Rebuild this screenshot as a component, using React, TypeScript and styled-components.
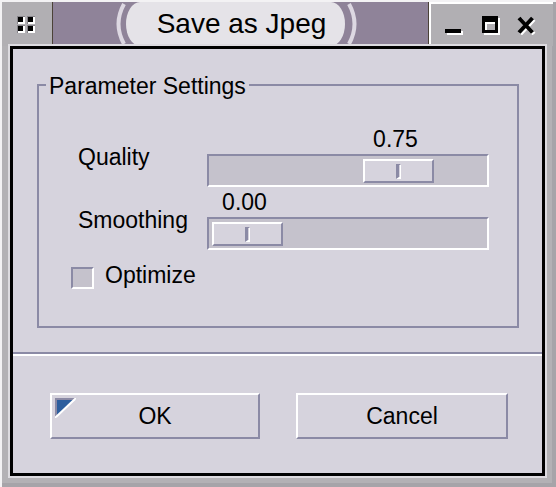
import styled, { createGlobalStyle } from "styled-components";

const GlobalStyle = createGlobalStyle`
  html, body {
    margin: 0;
    padding: 0;
    background: #b3b1b5;
  }
  body {
    font-family: "Liberation Sans", Arial, Helvetica, sans-serif;
    color: #000;
  }
`;

const BG = "#d6d3dd";
const TROUGH = "#c5c2cc";
const DARK = "#8b8aa5";

interface Param {
  label: string;
  value: number;
}

const params: Param[] = [
  { label: "Quality", value: 0.75 },
  { label: "Smoothing", value: 0 },
];

// free travel of the slider thumb inside its trough
const TRAVEL = 201;

export default function App() {
  return (
    <>
      <GlobalStyle />
      <Window>
        <TitleBar>
          <MenuButton>
            <svg width="20" height="18" viewBox="0 0 20 18">
              {[
                [0, 0],
                [10, 0],
                [0, 9],
                [10, 9],
              ].map(([x, y]) => (
                <g key={`${x}-${y}`}>
                  <rect x={x} y={y} width="8" height="8" fill="#858389" />
                  <rect x={x + 1} y={y + 1} width="7" height="7" fill="#fff" />
                  <rect x={x + 1} y={y + 1} width="5" height="5" fill="#000" />
                </g>
              ))}
            </svg>
          </MenuButton>
          <TitleCenter>
            <svg width="12" height="44" viewBox="0 0 12 44">
              <path d="M10 2 Q -1 22 10 42" stroke="#ddd8e2" strokeWidth="4" fill="none" />
            </svg>
            <TitlePill>Save as Jpeg</TitlePill>
            <svg width="14" height="44" viewBox="0 0 14 44">
              <path d="M4 2 Q 15 22 4 42" stroke="#ddd8e2" strokeWidth="4" fill="none" />
            </svg>
          </TitleCenter>
          <WindowControls>
            <svg width="19" height="20" viewBox="0 0 19 20">
              <rect x="2" y="16" width="16" height="4" fill="#fff" />
              <rect x="0" y="14" width="16" height="4" fill="#000" />
            </svg>
            <svg width="19" height="20" viewBox="0 0 19 20">
              <path
                d="M3 3 H19 V20 H3 Z M6 9 V17 H16 V9 Z"
                fill="#fff"
                fillRule="evenodd"
              />
              <path
                d="M1 1 H17 V18 H1 Z M4 7 V15 H14 V7 Z"
                fill="#000"
                fillRule="evenodd"
              />
            </svg>
            <svg width="19" height="20" viewBox="0 0 19 20">
              <path d="M3.5 4.5 L17 19 M17 4.5 L3.5 19" stroke="#fff" strokeWidth="4" />
              <path d="M2 3 L15.5 17.5 M15.5 3 L2 17.5" stroke="#000" strokeWidth="4" />
            </svg>
          </WindowControls>
        </TitleBar>

        <ClientWrap>
          <Client>
            <ParamGroup>
              <GroupLegend>Parameter Settings</GroupLegend>
              {params.map((p) => (
                <SliderRow key={p.label}>
                  <FieldLabel>{p.label}</FieldLabel>
                  <ValueText $value={p.value}>{p.value.toFixed(2)}</ValueText>
                  <Trough>
                    <Thumb $value={p.value}>
                      <Grip />
                    </Thumb>
                  </Trough>
                </SliderRow>
              ))}
              <CheckRow>
                <CheckBox />
                <span>Optimize</span>
              </CheckRow>
            </ParamGroup>

            <Separator />

            <ButtonRow>
              <DialogButton $w={210}>
                <FocusMark width="21" height="20" viewBox="0 0 21 20">
                  <polygon points="0,0 21,0 0,20" fill="#2d5e9e" />
                  <rect x="0" y="0" width="21" height="2" fill={DARK} />
                  <rect x="0" y="0" width="2" height="20" fill={DARK} />
                  <line x1="21" y1="0" x2="0" y2="20" stroke="#fff" strokeWidth="2" />
                </FocusMark>
                OK
              </DialogButton>
              <DialogButton $w={212}>Cancel</DialogButton>
            </ButtonRow>
          </Client>
        </ClientWrap>
      </Window>
    </>
  );
}

const Window = styled.div`
  box-sizing: border-box;
  width: 556px;
  height: 487px;
  display: flex;
  flex-direction: column;
  padding: 2px 3px 0 2px;
  background: #b3b1b5;
  box-shadow: inset 2px 2px 0 #f3f2f4, inset -4px -4px 0 #a6a4a9;
`;

const TitleBar = styled.div`
  display: flex;
  height: 44px;
  flex-shrink: 0;
`;

const MenuButton = styled.div`
  width: 50px;
  border-right: 1px solid #4b4238;
  background: #b1afb3;
  display: flex;
  align-items: center;
  justify-content: center;
  padding-top: 2px;
  box-sizing: border-box;
  flex-shrink: 0;
  width: 51px;
`;

const TitleCenter = styled.div`
  flex: 1;
  display: flex;
  justify-content: center;
  align-items: stretch;
  background: #8f8399;
  padding-right: 8px;
`;

const TitlePill = styled.div`
  display: flex;
  align-items: center;
  background: #e5e3e8;
  border-radius: 14px / 22px;
  padding: 0 19px 0 31px;
  font-size: 28px;
  line-height: 28px;
  white-space: nowrap;
`;

const WindowControls = styled.div`
  box-sizing: border-box;
  width: 125px;
  flex-shrink: 0;
  display: flex;
  align-items: center;
  gap: 17px;
  padding: 2px 0 0 16px;
  border-left: 1px solid #4b4238;
  background: #b1afb3;
  box-shadow: inset 2px 2px 0 #fff;
`;

const ClientWrap = styled.div`
  flex: 1;
  display: flex;
  padding: 0 8px 11px 8px;
`;

const Client = styled.div`
  flex: 1;
  display: flex;
  flex-direction: column;
  border: 3px solid #000;
  box-shadow: 0 0 0 2px #dddbe0;
  background: ${BG};
  padding-top: 23px;
  font-size: 23px;
  line-height: 23px;
`;

const ParamGroup = styled.fieldset`
  margin: 0 23px 0 24px;
  padding: 30px 0 37px 0;
  border: 2px solid ${DARK};
  min-width: 0;
`;

const GroupLegend = styled.legend`
  margin-left: 7px;
  padding: 3px 3px 0;
  font-size: 23px;
  line-height: 23px;
`;

const SliderRow = styled.div`
  display: grid;
  grid-template-columns: 129px 282px;
  grid-template-rows: 23px 33px;
  row-gap: 3px;
  padding-left: 39px;

  & + & {
    margin-top: 4px;
  }
`;

const FieldLabel = styled.span`
  grid-column: 1;
  grid-row: 1 / span 2;
  align-self: center;
`;

const ValueText = styled.span<{ $value: number }>`
  grid-column: 2;
  grid-row: 1;
  width: 71px;
  margin-left: ${(p) => Math.round(p.$value * TRAVEL) + 2}px;
  text-align: center;
`;

const Trough = styled.div`
  grid-column: 2;
  grid-row: 2;
  box-sizing: border-box;
  display: flex;
  align-items: flex-start;
  padding: 3px 3px 2px;
  background: ${TROUGH};
  border: 2px solid;
  border-color: ${DARK} #fff #fff ${DARK};
`;

const Thumb = styled.div<{ $value: number }>`
  box-sizing: border-box;
  width: 71px;
  height: 24px;
  margin-left: ${(p) => Math.round(p.$value * TRAVEL)}px;
  display: flex;
  align-items: center;
  justify-content: center;
  background: ${BG};
  border: 2px solid;
  border-color: #fff ${DARK} ${DARK} #fff;
`;

const Grip = styled.div`
  width: 1px;
  height: 12px;
  border-left: 3px solid ${DARK};
  border-top: 1px solid ${DARK};
  border-right: 1px solid #fff;
  border-bottom: 2px solid #fff;
`;

const CheckRow = styled.div`
  display: flex;
  align-items: flex-start;
  gap: 11px;
  margin-top: 14px;
  padding-left: 32px;
`;

const CheckBox = styled.div`
  box-sizing: border-box;
  width: 23px;
  height: 22px;
  margin-top: 3px;
  background: ${TROUGH};
  border: 2px solid;
  border-color: ${DARK} #fff #fff ${DARK};
`;

const Separator = styled.div`
  margin-top: 24px;
  border-top: 2px solid ${DARK};
  border-bottom: 2px solid #fff;
`;

const ButtonRow = styled.div`
  display: flex;
  justify-content: space-between;
  margin-top: 37px;
  padding: 0 34px 0 37px;
`;

const DialogButton = styled.div<{ $w: number }>`
  position: relative;
  box-sizing: border-box;
  width: ${(p) => p.$w}px;
  height: 46px;
  display: flex;
  align-items: center;
  justify-content: center;
  background: ${BG};
  border: 2px solid;
  border-color: #fff ${DARK} ${DARK} #fff;
`;

const FocusMark = styled.svg`
  position: absolute;
  top: 3px;
  left: 3px;
`;
